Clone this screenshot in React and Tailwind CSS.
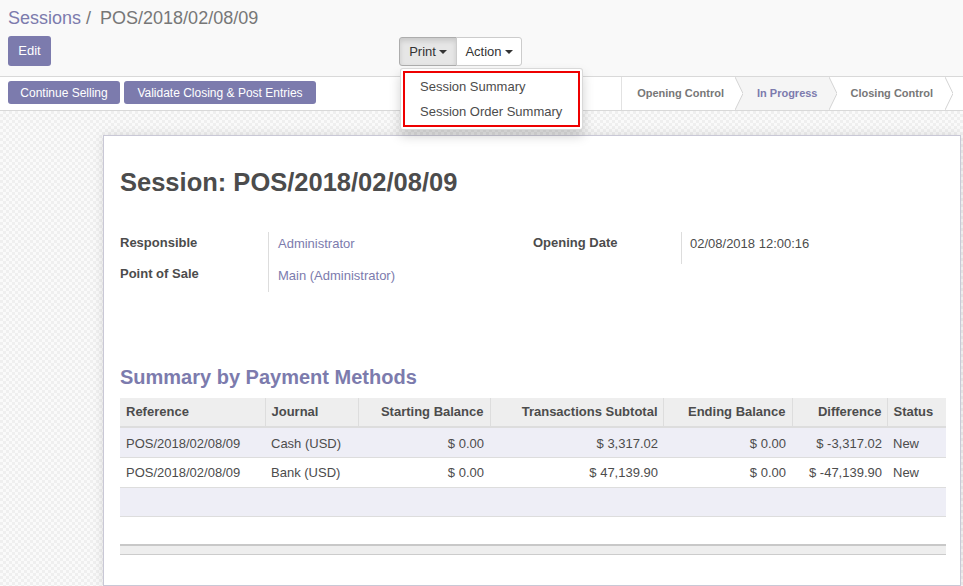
export default function App() {
  const rows = [
    { ref: "POS/2018/02/08/09", journal: "Cash (USD)", start: "$ 0.00", subtotal: "$ 3,317.02", end: "$ 0.00", diff: "$ -3,317.02", status: "New" },
    { ref: "POS/2018/02/08/09", journal: "Bank (USD)", start: "$ 0.00", subtotal: "$ 47,139.90", end: "$ 0.00", diff: "$ -47,139.90", status: "New" },
  ];

  return (
    <div className="relative h-[586px] w-[963px] overflow-hidden bg-white font-['Liberation_Sans',Arial,sans-serif] text-[13px] text-[#4c4c4c]">
      {/* control panel */}
      <div className="h-[77px] border-b border-[#d9d9d9] bg-[#f9f9f9] px-2 pt-[5px]">
        <div className="h-[26px] text-[18px] leading-[26px] text-[#777]">
          <span className="text-[#7c7bad]">Sessions</span>
          <span className="ml-[5px] mr-[9px]">/</span>
          <span>POS/2018/02/08/09</span>
        </div>
        <div className="mt-[5px] flex items-start">
          <div className="w-[391px]">
            <button className="h-[30px] w-[43px] rounded-[3px] bg-[#7c7bad] text-[13px] text-white">Edit</button>
          </div>
          <div className="mt-px flex h-[29px]">
            <button className="flex w-[58px] items-center justify-center gap-[3px] rounded-l-[3px] border border-[#adadad] bg-[#e6e6e6] text-[#333] shadow-[inset_0_3px_5px_rgba(0,0,0,0.125)]">
              Print
              <span className="mt-px border-x-[4px] border-t-[4px] border-x-transparent border-t-[#333]" />
            </button>
            <button className="-ml-px flex w-[66px] items-center justify-center gap-[3px] rounded-r-[3px] border border-[#ccc] bg-white text-[#333]">
              Action
              <span className="mt-px border-x-[4px] border-t-[4px] border-x-transparent border-t-[#333]" />
            </button>
          </div>
        </div>
      </div>

      {/* status bar */}
      <div className="flex h-[34px] border-b border-[#d9d9d9] bg-white">
        <div className="flex gap-1 pl-2 pt-1">
          <button className="h-[23px] w-[112px] rounded-[3px] bg-[#7c7bad] text-[12px] text-white">Continue Selling</button>
          <button className="h-[23px] w-[192px] rounded-[3px] bg-[#7c7bad] text-[12px] text-white">Validate Closing &amp; Post Entries</button>
        </div>
        <div className="ml-auto flex h-[33px] border-l border-[#e2e2e2] pr-[10px] text-[11px] font-bold">
          <div className="flex items-center pl-[15px] pr-[11px] text-[#777]">Opening Control</div>
          <svg width="8" height="33" className="bg-[#f5f5f5]">
            <polygon points="0,0 8,16.5 0,33" fill="#fff" />
            <polyline points="0,0 8,16.5 0,33" fill="none" stroke="#d4d4d4" />
          </svg>
          <div className="flex items-center bg-[#f5f5f5] pl-[14px] pr-[11px] text-[#7c7bad]">In Progress</div>
          <svg width="8" height="33">
            <polygon points="0,0 8,16.5 0,33" fill="#f5f5f5" />
            <polyline points="0,0 8,16.5 0,33" fill="none" stroke="#d4d4d4" />
          </svg>
          <div className="flex items-center pl-[14px] pr-[12px] text-[#777]">Closing Control</div>
          <svg width="8" height="33">
            <polyline points="0,0 8,16.5 0,33" fill="none" stroke="#d4d4d4" />
          </svg>
        </div>
      </div>

      {/* sheet background */}
      <div className="h-[475px] bg-[repeating-conic-gradient(#efefef_0_25%,#fafafa_0_50%)] bg-[length:6px_6px] pt-6 pl-[103px] pr-[2px]">
        <div className="h-[451px] border border-[#c9c8d6] bg-white pl-[16px] pr-[14px] pt-[31px] shadow-[0_0_10px_rgba(0,0,0,0.12)]">
          <h1 className="h-[30px] text-[25.5px] font-bold leading-[30px] text-[#4c4c4c]">Session: POS/2018/02/08/09</h1>

          <div className="mt-[35px] flex">
            <div className="w-[413px]">
              <div className="flex h-[30px]">
                <div className="w-[149px] border-r border-[#ddd] pt-[1px] font-bold">Responsible</div>
                <div className="pl-[9px] pt-[2px] text-[#7c7bad]">Administrator</div>
              </div>
              <div className="flex h-[30px]">
                <div className="w-[149px] border-r border-[#ddd] pt-[2px] font-bold">Point of Sale</div>
                <div className="pl-[9px] pt-[4px] text-[#7c7bad]">Main (Administrator)</div>
              </div>
            </div>
            <div className="flex h-[32px]">
              <div className="w-[149px] border-r border-[#ddd] pt-[1px] font-bold">Opening Date</div>
              <div className="pl-[8px] pt-[2px] text-[#4c4c4c]">02/08/2018 12:00:16</div>
            </div>
          </div>

          <h2 className="mt-[74px] h-[22px] text-[20px] font-bold leading-[22px] text-[#7c7bad]">Summary by Payment Methods</h2>

          <table className="mt-[10px] w-[826px] table-fixed border-collapse">
            <colgroup>
              <col className="w-[145px]" />
              <col className="w-[93px]" />
              <col className="w-[132px]" />
              <col className="w-[173px]" />
              <col className="w-[129px]" />
              <col className="w-[95px]" />
              <col className="w-[59px]" />
            </colgroup>
            <thead>
              <tr className="h-[29px] bg-[#eee] font-bold">
                <th className="border-b-2 border-r border-b-[#ddd] border-r-[#ddd] px-[6px] text-left font-bold">Reference</th>
                <th className="border-b-2 border-r border-b-[#ddd] border-r-[#ddd] px-[6px] text-left font-bold">Journal</th>
                <th className="border-b-2 border-r border-b-[#ddd] border-r-[#ddd] px-[6px] text-right font-bold">Starting Balance</th>
                <th className="border-b-2 border-r border-b-[#ddd] border-r-[#ddd] px-[5px] text-right font-bold">Transactions Subtotal</th>
                <th className="border-b-2 border-r border-b-[#ddd] border-r-[#ddd] px-[6px] text-right font-bold">Ending Balance</th>
                <th className="border-b-2 border-r border-b-[#ddd] border-r-[#ddd] px-[5px] text-right font-bold">Difference</th>
                <th className="border-b-2 border-b-[#ddd] px-[6px] text-left font-bold">Status</th>
              </tr>
            </thead>
            <tbody>
              {rows.map((r, i) => (
                <tr key={i} className={`h-[30px] border-b border-[#ddd] ${i % 2 === 0 ? "bg-[#eeeef6]" : "bg-white"}`}>
                  <td className="px-[6px] pt-[2px]">{r.ref}</td>
                  <td className="px-[6px] pt-[2px]">{r.journal}</td>
                  <td className="px-[6px] pt-[2px] text-right">{r.start}</td>
                  <td className="px-[5px] pt-[2px] text-right">{r.subtotal}</td>
                  <td className="px-[6px] pt-[2px] text-right">{r.end}</td>
                  <td className="px-[5px] pt-[2px] text-right">{r.diff}</td>
                  <td className="px-[6px] pt-[2px]">{r.status}</td>
                </tr>
              ))}
              <tr className="h-[29px] border-b border-[#ddd] bg-[#eeeef6]">
                <td colSpan={7} />
              </tr>
              <tr className="h-[29px] bg-white">
                <td colSpan={7} />
              </tr>
            </tbody>
            <tfoot>
              <tr className="h-[9px] border-t-2 border-b border-t-[#c8c8c8] border-b-[#ccc] bg-[#eee]">
                <td colSpan={7} />
              </tr>
            </tfoot>
          </table>
        </div>
      </div>

      {/* print dropdown */}
      <div className="absolute left-[400px] top-[68px] w-[183px] rounded-[3px] border border-[rgba(0,0,0,0.15)] bg-white p-[2px] shadow-[0_6px_12px_rgba(0,0,0,0.175)]">
        <div className="border-2 border-[#e00] pt-[2px] pb-px">
          <div className="px-[15px] py-[3px] leading-[18.5px] text-[#4c4c4c]">Session Summary</div>
          <div className="px-[15px] py-[3px] leading-[18.5px] text-[#4c4c4c]">Session Order Summary</div>
        </div>
      </div>
    </div>
  );
}
